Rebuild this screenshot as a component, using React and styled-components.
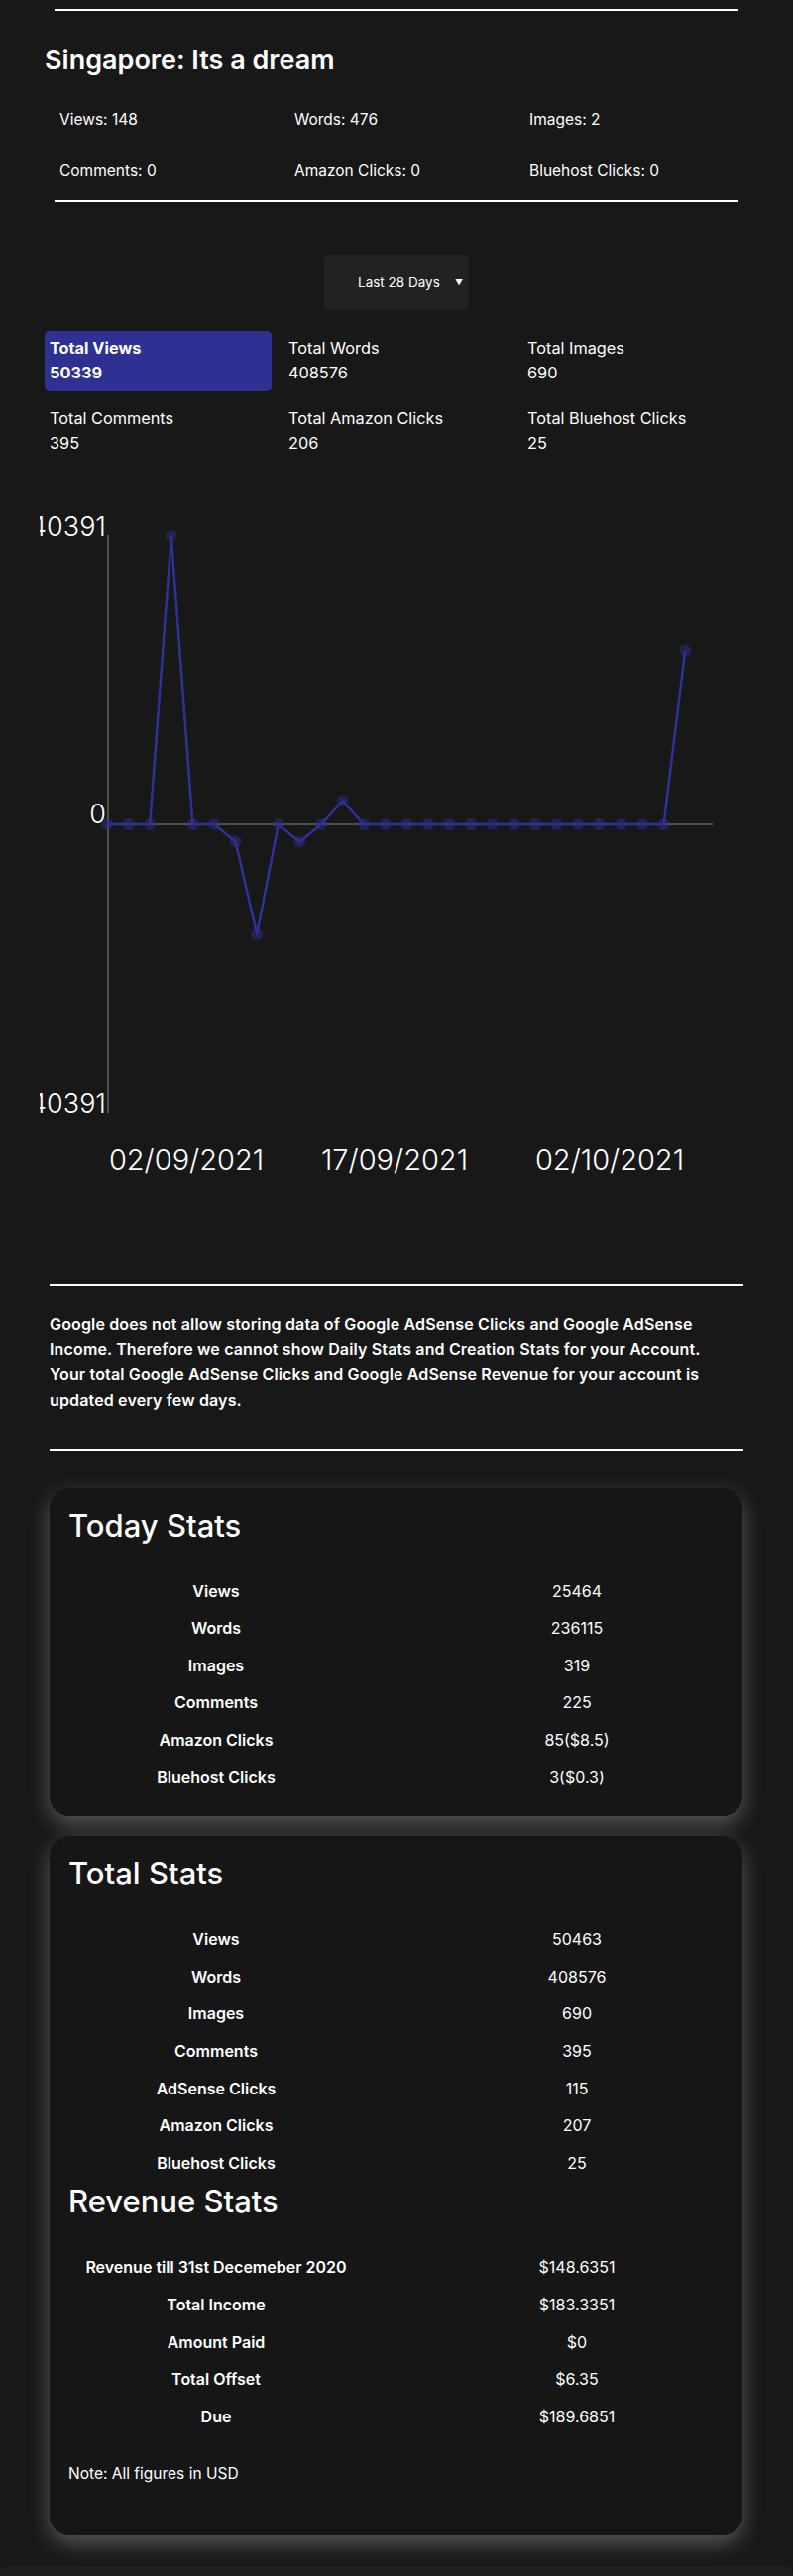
import React from "react";
import styled, { createGlobalStyle } from "styled-components";

const GlobalStyle = createGlobalStyle`
    body {
        margin: 0;
        background: #181818;
        color: #fff;
        font-family: Inter, "Noto Sans", sans-serif;
    }
`;

const post = [
    "Views: 148",
    "Words: 476",
    "Images: 2",
    "Comments: 0",
    "Amazon Clicks: 0",
    "Bluehost Clicks: 0",
];

const totals = [
    { label: "Total Views", value: "50339", active: true },
    { label: "Total Words", value: "408576" },
    { label: "Total Images", value: "690" },
    { label: "Total Comments", value: "395" },
    { label: "Total Amazon Clicks", value: "206" },
    { label: "Total Bluehost Clicks", value: "25" },
];

const today = [
    ["Views", "25464"],
    ["Words", "236115"],
    ["Images", "319"],
    ["Comments", "225"],
    ["Amazon Clicks", "85($8.5)"],
    ["Bluehost Clicks", "3($0.3)"],
];

const total = [
    ["Views", "50463"],
    ["Words", "408576"],
    ["Images", "690"],
    ["Comments", "395"],
    ["AdSense Clicks", "115"],
    ["Amazon Clicks", "207"],
    ["Bluehost Clicks", "25"],
];

const revenue = [
    ["Revenue till 31st Decemeber 2020", "$148.6351"],
    ["Total Income", "$183.3351"],
    ["Amount Paid", "$0"],
    ["Total Offset", "$6.35"],
    ["Due", "$189.6851"],
];

const MAX = 40391;
const series = [
    0, 0, 0, 40391, 0, 0, -2412, -15400, 0, -2474, 0, 3278, 0, 0, 0, 0, 0,
    0, 0, 0, 0, 0, 0, 0, 0, 0, 0, 24309,
];

const ZERO = 332;
const HALF = 291;
const px = (i) => 68 + 21.6 * i;
const py = (v) => ZERO - (v / MAX) * HALF;

const ViewsChart = () => {
    const points = series.map((v, i) => `${px(i)},${py(v)}`).join(" ");
    return (
        <ChartWrap>
            <svg width="720" height="700" viewBox="0 0 720 700">
                <line x1="69" y1="40" x2="69" y2="623" stroke="#4f4f4f" strokeWidth="2" />
                <line x1="69" y1={ZERO} x2="679" y2={ZERO} stroke="#4f4f4f" strokeWidth="2" />
                <g fill="#fff" fontSize="27" fontWeight="300" textAnchor="end">
                    <text x="67" y="41">40391</text>
                    <text x="67" y="331">0</text>
                    <text x="67" y="623">-40391</text>
                </g>
                <g fill="#fff" fontSize="29" fontWeight="300" textAnchor="middle">
                    <text x="148" y="681">02/09/2021</text>
                    <text x="358" y="681">17/09/2021</text>
                    <text x="575" y="681">02/10/2021</text>
                </g>
                <polyline points={points} fill="none" stroke="#2e3196" strokeWidth="2.5" />
                {series.map((v, i) => (
                    <circle key={i} cx={px(i)} cy={py(v)} r="6" fill="rgba(46, 49, 150, 0.45)" />
                ))}
            </svg>
        </ChartWrap>
    );
};

const StatTable = ({ rows, gapTop }) => (
    <Table $gapTop={gapTop}>
        {rows.map(([label, value]) => (
            <React.Fragment key={label}>
                <RowLabel>{label}</RowLabel>
                <RowValue>{value}</RowValue>
            </React.Fragment>
        ))}
    </Table>
);

const App = () => {
    return (
        <Page>
            <GlobalStyle />
            <PostBlock>
                <Rule />
                <PostTitle>Singapore: Its a dream</PostTitle>
                <PostStats>
                    {post.map((s) => (
                        <span key={s}>{s}</span>
                    ))}
                </PostStats>
                <Rule />
            </PostBlock>

            <Select>
                <span>Last 28 Days</span>
                <Caret>▼</Caret>
            </Select>

            <TotalsGrid>
                {totals.map((t) => (
                    <Tile key={t.label} $active={t.active}>
                        <div>{t.label}</div>
                        <div>{t.value}</div>
                    </Tile>
                ))}
            </TotalsGrid>

            <ViewsChart />

            <Notice>
                <Rule $wide />
                <NoticeText>
                    Google does not allow storing data of Google AdSense Clicks
                    and Google AdSense Income. Therefore we cannot show Daily
                    Stats and Creation Stats for your Account. Your total Google
                    AdSense Clicks and Google AdSense Revenue for your account is
                    updated every few days.
                </NoticeText>
                <Rule $wide />
            </Notice>

            <Card>
                <CardTitle>Today Stats</CardTitle>
                <StatTable rows={today} gapTop={27} />
            </Card>

            <Card $last>
                <CardTitle>Total Stats</CardTitle>
                <StatTable rows={total} gapTop={27} />
                <CardTitle>Revenue Stats</CardTitle>
                <StatTable rows={revenue} gapTop={28} />
                <Note>Note: All figures in USD</Note>
            </Card>

            <Footer />
        </Page>
    );
};

export default App;

const Page = styled.div`
    width: 800px;
    display: flex;
    flex-direction: column;
    padding-top: 9px;
`;

const PostBlock = styled.div`
    display: flex;
    flex-direction: column;
`;

const Rule = styled.div`
    height: 2px;
    background: #fff;
    margin: ${(p) => (p.$wide ? "0 50px" : "0 55px")};
`;

const PostTitle = styled.h2`
    margin: 32px 0 0 45px;
    font-size: 27px;
    line-height: 36px;
    font-weight: 600;
`;

const PostStats = styled.div`
    display: grid;
    grid-template-columns: repeat(3, 237px);
    row-gap: 28px;
    margin: 30px 0 17px 60px;
    font-size: 15.5px;
    line-height: 24px;
`;

const Select = styled.div`
    align-self: center;
    width: 146px;
    height: 56px;
    margin-top: 53px;
    box-sizing: border-box;
    padding: 0 6px 0 34px;
    display: flex;
    align-items: center;
    justify-content: space-between;
    background: #222;
    border-radius: 4px;
    font-size: 13.5px;
`;

const Caret = styled.span`
    font-size: 8px;
`;

const TotalsGrid = styled.div`
    display: grid;
    grid-template-columns: repeat(3, 229px);
    grid-auto-rows: 61px;
    column-gap: 12px;
    row-gap: 10px;
    margin: 21px 0 0 45px;
`;

const Tile = styled.div`
    box-sizing: border-box;
    padding: 5px;
    border-radius: 5px;
    font-size: 16.3px;
    line-height: 25px;
    background: ${(p) => (p.$active ? "#2e3192" : "transparent")};
    font-weight: ${(p) => (p.$active ? 700 : 400)};
`;

const ChartWrap = styled.div`
    margin: 34px 0 0 40px;
    height: 700px;

    svg {
        display: block;
        font-family: Inter, "Noto Sans", sans-serif;
    }
`;

const Notice = styled.div`
    margin-top: 96px;
    display: flex;
    flex-direction: column;
`;

const NoticeText = styled.p`
    margin: 26px 85px 36px 50px;
    font-size: 16px;
    letter-spacing: 0.15px;
    line-height: 25.7px;
    font-weight: 600;
`;

const Card = styled.div`
    margin: ${(p) => (p.$last ? "20px" : "37px")} 51px 0 50px;
    padding: 18px 18px ${(p) => (p.$last ? "50px" : "21px")} 19px;
    border-radius: 20px;
    background: #161616;
    box-shadow: 0 8px 22px rgba(255, 255, 255, 0.28);
`;

const CardTitle = styled.h2`
    margin: 0;
    font-size: 31px;
    line-height: 40px;
    font-weight: 500;
`;

const Table = styled.div`
    display: grid;
    grid-template-columns: 1fr 1fr;
    column-gap: 66px;
    grid-auto-rows: 37.6px;
    align-items: center;
    text-align: center;
    margin-top: ${(p) => p.$gapTop}px;
    font-size: 16px;
`;

const RowLabel = styled.div`
    font-weight: 600;
`;

const RowValue = styled.div`
    font-weight: 400;
`;

const Note = styled.p`
    margin: 27px 0 0;
    font-size: 15.5px;
    line-height: 24px;
`;

const Footer = styled.div`
    margin-top: 31px;
    height: 40px;
    background: #202020;
    border-radius: 8px 8px 0 0;
`;
